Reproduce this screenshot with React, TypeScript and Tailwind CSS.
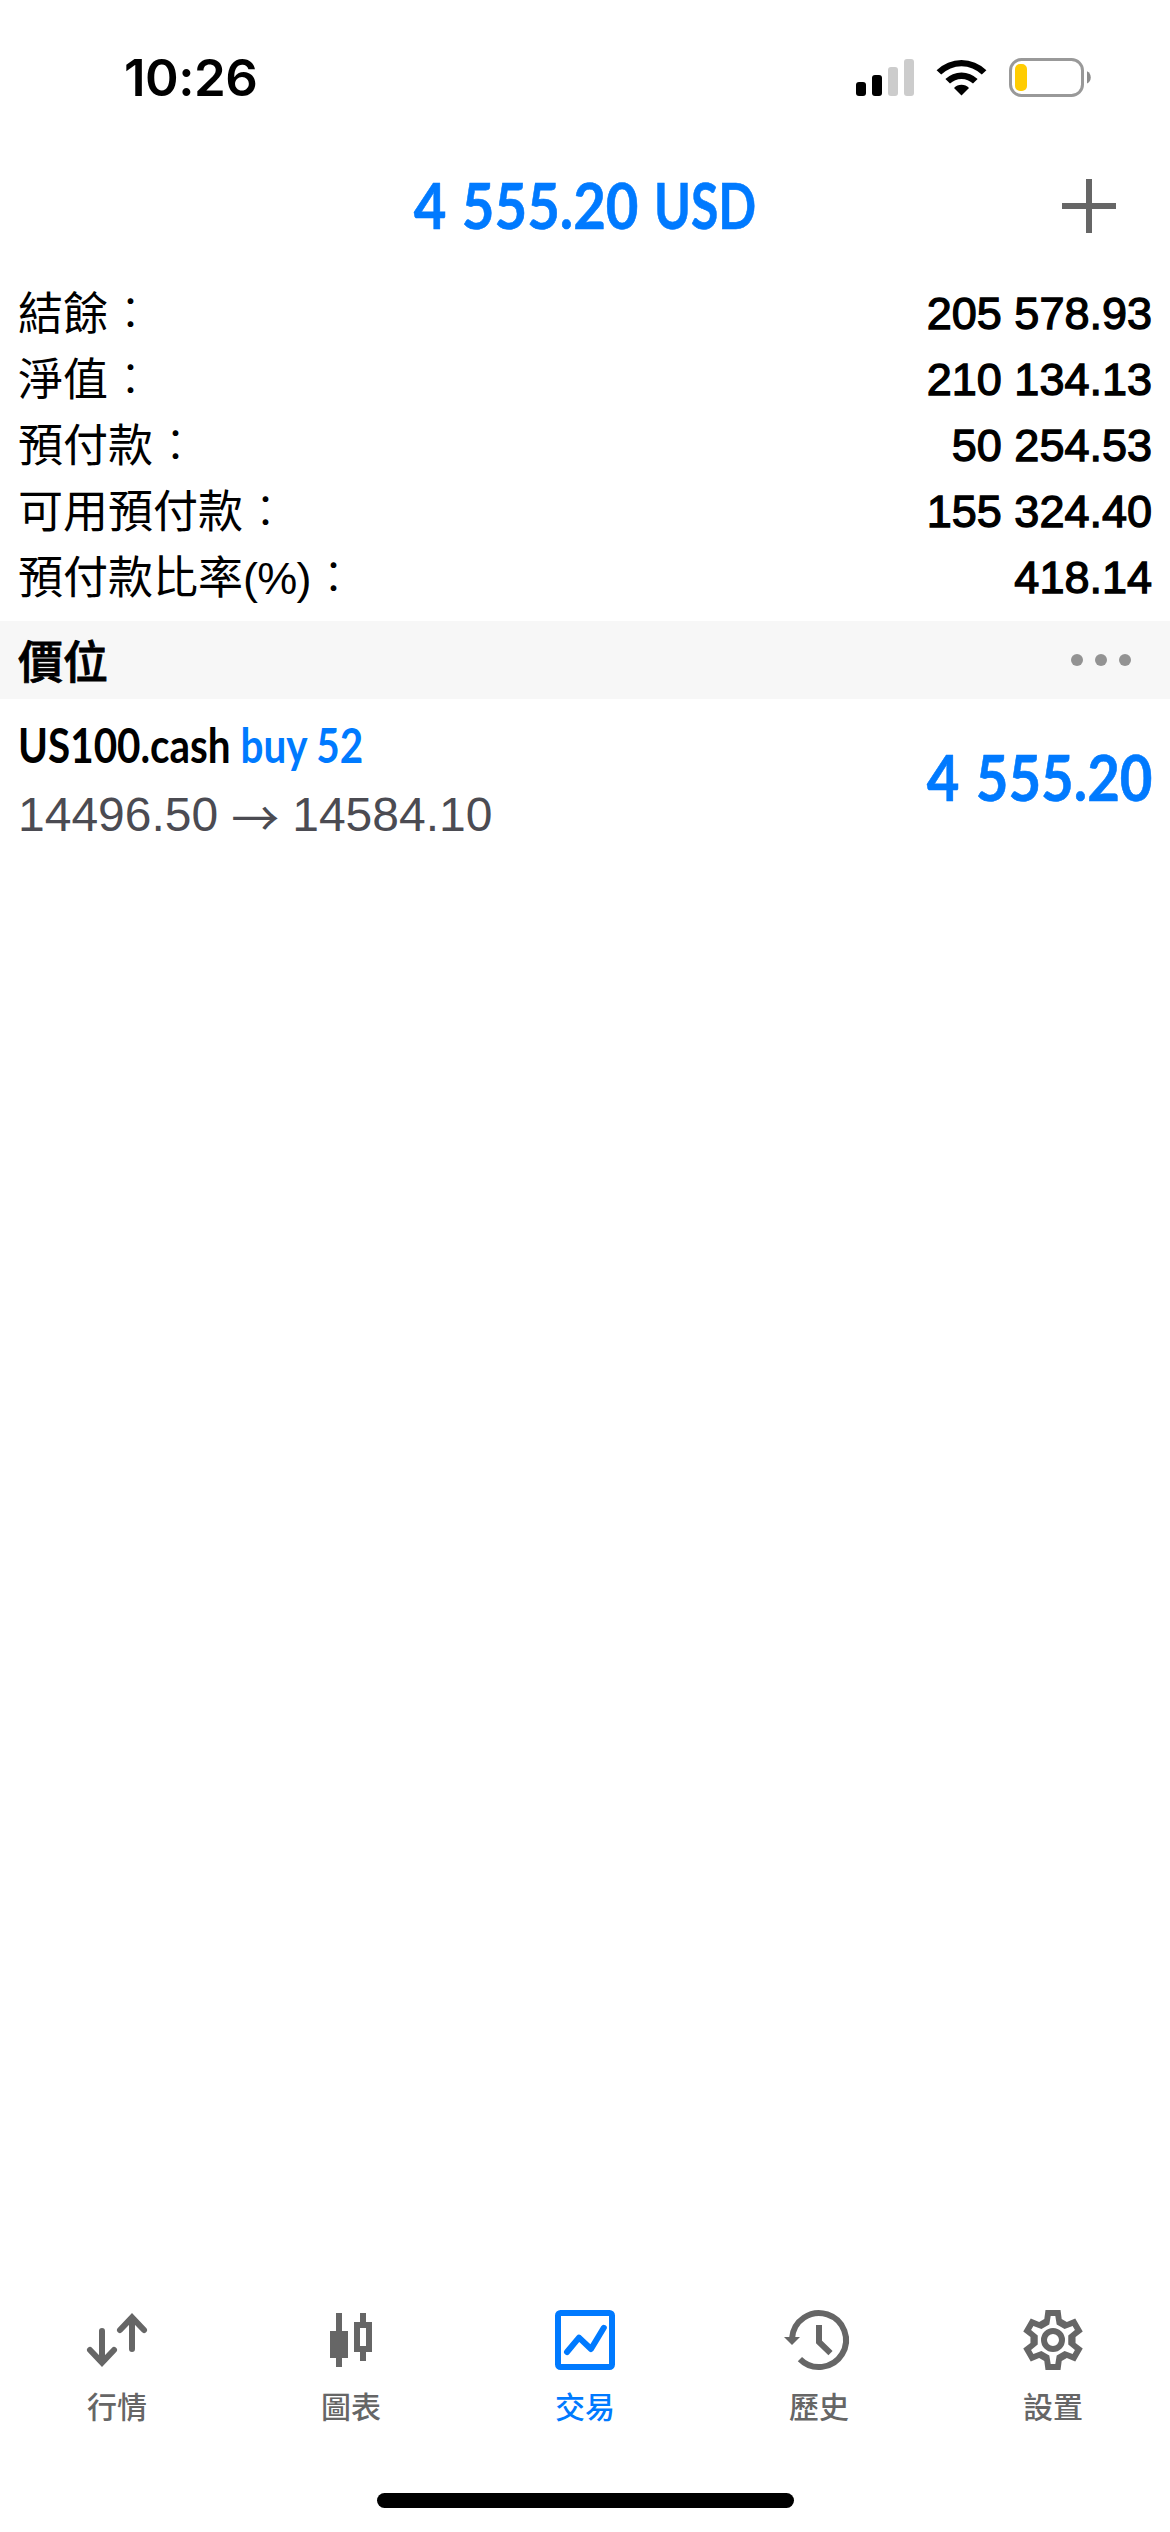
import type { ReactNode } from "react";
import { clsx } from "clsx";

const account = [
  { label: "結餘", value: "205 578.93" },
  { label: "淨值", value: "210 134.13" },
  { label: "預付款", value: "50 254.53" },
  { label: "可用預付款", value: "155 324.40" },
  { label: "預付款比率", unit: "(%)", value: "418.14" },
];

// Repeats one tooth of the gear six times around the centre of a 60x60 box
function ring(tooth: number[][]) {
  const pts: string[] = [];
  for (let i = 0; i < 6; i++) {
    const a = (i * Math.PI) / 3;
    for (const [x, y] of tooth) {
      const px = 30 + x * Math.cos(a) - y * Math.sin(a);
      const py = 30 + x * Math.sin(a) + y * Math.cos(a);
      pts.push(`${px.toFixed(2)} ${py.toFixed(2)}`);
    }
  }
  return `M${pts.join("L")}Z`;
}

const gearPath =
  ring([[-8.7, -21], [-7.5, -30], [7.5, -30], [8.7, -21]]) +
  ring([[-3.7, -15.5], [-2.3, -24], [2.3, -24], [3.7, -15.5]]);

function QuotesIcon() {
  return (
    <g fill="none" stroke="currentColor" strokeWidth={6} strokeLinecap="round">
      <path d="M15 21V50M3 40L15 52.6L27 40" />
      <path d="M45 39V10M33 20L45 7.4L57 20" />
    </g>
  );
}

function ChartIcon() {
  return (
    <path
      fill="currentColor"
      fillRule="evenodd"
      d="M15 3h6v18h6v27h-6v9h-6v-9H9V21h6zM39 3h6v9h6v30h-6v9h-6v-9h-6V12h6zM39 18v18h6V18z"
    />
  );
}

function TradeIcon() {
  return (
    <g fill="none" stroke="currentColor" strokeWidth={6}>
      <rect x={3} y={3} width={54} height={54} rx={2.5} />
      <path d="M12 42L24 27.6L36 39L48.8 17.8" strokeLinecap="round" strokeLinejoin="round" />
    </g>
  );
}

function HistoryIcon() {
  return (
    <g fill="none" stroke="currentColor" strokeWidth={6}>
      <path d="M3.1 28A27 27 0 1 1 10.9 49.1" />
      <path d="M30 15V32L41.5 43.2" />
      <path d="M-5 27H11L3 35Z" fill="currentColor" stroke="none" />
    </g>
  );
}

function SettingsIcon() {
  return (
    <g>
      <path d={gearPath} fill="currentColor" fillRule="evenodd" />
      <circle cx={30} cy={30} r={9} fill="none" stroke="currentColor" strokeWidth={6} />
    </g>
  );
}

const tabs: { label: string; icon: ReactNode; active?: boolean }[] = [
  { label: "行情", icon: <QuotesIcon /> },
  { label: "圖表", icon: <ChartIcon /> },
  { label: "交易", icon: <TradeIcon />, active: true },
  { label: "歷史", icon: <HistoryIcon /> },
  { label: "設置", icon: <SettingsIcon /> },
];

function StatusBar() {
  return (
    <div className="flex h-[156px] items-start justify-between pt-[58px] pr-[79px] pl-[124px]">
      <span className="font-['Inter',sans-serif] text-[51px] leading-[39px] font-semibold tracking-[-0.5px]">10:26</span>
      <div className="flex">
        <svg className="mr-[22px] h-[39px] w-[58px]" viewBox="0 0 58 39">
          <rect x={0} y={24} width={10} height={14} rx={3} />
          <rect x={16} y={17} width={10} height={21} rx={3} />
          <rect x={32} y={9} width={10} height={29} rx={3} fill="#cccccc" />
          <rect x={48} y={1} width={10} height={37} rx={3} fill="#cccccc" />
        </svg>
        <svg className="mr-[22px] h-[39px] w-[51px]" viewBox="0 0 51 39">
          <path d="M.6 12.2A35.5 35.5 0 0 1 50.4 12.2L45.8 16.6A29 29 0 0 0 5.2 16.6Z" />
          <path d="M9.4 21A23 23 0 0 1 41.6 21L37 25.6A16.4 16.4 0 0 0 14 25.6Z" />
          <path d="M18 29.9A10.6 10.6 0 0 1 33 29.9L25.5 37.6Z" />
        </svg>
        <svg className="h-[39px] w-[82px]" viewBox="0 0 82 39">
          <rect x={1.5} y={1.5} width={72} height={36} rx={11} fill="none" stroke="#999999" strokeWidth={3} />
          <rect x={6} y={6} width={12} height={27} rx={5} fill="#ffcc02" />
          <path d="M78 13.3C83 15.5 83 23.5 78 25.6Z" fill="#8c8c8c" />
        </svg>
      </div>
    </div>
  );
}

export default function App() {
  return (
    <div className="flex h-[2532px] w-[1170px] flex-col overflow-hidden bg-white font-['Liberation_Sans','Noto_Sans_CJK_TC',sans-serif] text-black">
      <StatusBar />

      {/* Floating profit */}
      <header className="grid h-[124px] grid-cols-[1fr_auto_1fr] items-start pr-[54px]">
        <h1 className="col-start-2 origin-center scale-x-[0.88] pl-[61px] font-['Lato',sans-serif] text-[64px] leading-[97px] font-bold [word-spacing:2px] whitespace-nowrap text-[#007aff] [-webkit-text-stroke:0.6px_#007aff]">
          4 555.20 <span className="-mr-[15px] inline-block origin-left scale-x-[0.885]">USD</span>
        </h1>
        <svg className="mt-[23px] h-[54px] w-[54px] justify-self-end text-[#666666]" viewBox="0 0 54 54">
          <path d="M24 0h6v24h24v6H30v24h-6V30H0v-6h24z" fill="currentColor" />
        </svg>
      </header>

      {/* Account summary */}
      <dl className="h-[341px] px-[18px]">
        {account.map((row) => (
          <div key={row.label} className="flex h-[66px] items-start justify-between text-[45px]">
            <dt className="font-['Noto_Sans_CJK_TC',sans-serif] leading-[61px]">
              {row.label}
              {row.unit && <span className="font-['Liberation_Sans',sans-serif] tracking-[-0.7px]">{row.unit}</span>}
              <span className="font-light">：</span>
            </dt>
            <dd className="leading-[67px] [-webkit-text-stroke:1.3px_black]">{row.value}</dd>
          </div>
        ))}
      </dl>

      <div className="flex h-[78px] items-center justify-between bg-[#f7f7f7] pr-[39px] pl-[18px]">
        <h2 className="font-['Noto_Sans_CJK_TC',sans-serif] text-[45px] leading-[78px] font-medium [-webkit-text-stroke:0.8px_black]">價位</h2>
        <div className="flex gap-3">
          <i className="size-3 rounded-full bg-[#939393]" />
          <i className="size-3 rounded-full bg-[#939393]" />
          <i className="size-3 rounded-full bg-[#939393]" />
        </div>
      </div>

      {/* Open position */}
      <section className="flex h-[156px] items-start justify-between px-[18px]">
        <div className="pt-[12px]">
          <p className="origin-left scale-x-[0.86] font-['Lato',sans-serif] text-[47px] leading-[68px] font-bold whitespace-nowrap">
            US100.cash <span className="text-[#007aff]">buy 52</span>
          </p>
          <p className="flex text-[48px] leading-[72px] text-[#4b4b52]">
            14496.50
            <span className="w-[74px] text-center font-['Noto_Sans_CJK_TC',sans-serif]">→</span>
            14584.10
          </p>
        </div>
        <span className="mt-[29px] origin-right scale-x-[0.88] font-['Lato',sans-serif] text-[64px] leading-[98px] font-bold [word-spacing:3px] whitespace-nowrap text-[#007aff] [-webkit-text-stroke:0.6px_#007aff]">
          4 555.20
        </span>
      </section>

      <main className="flex-1" />

      <nav className="grid h-[183px] grid-cols-5">
        {tabs.map((tab) => (
          <button
            key={tab.label}
            className={clsx("flex flex-col items-center", tab.active ? "text-[#007aff]" : "text-[#666666]")}
          >
            <svg className="h-[60px] w-[60px] overflow-visible" viewBox="0 0 60 60">
              {tab.icon}
            </svg>
            <span className="mt-[13px] font-['Noto_Sans_CJK_TC',sans-serif] text-[30px] leading-[44px] font-medium">
              {tab.label}
            </span>
          </button>
        ))}
      </nav>

      <div className="flex h-[39px] justify-center">
        <div className="h-[15px] w-[417px] rounded-full bg-black" />
      </div>
    </div>
  );
}
